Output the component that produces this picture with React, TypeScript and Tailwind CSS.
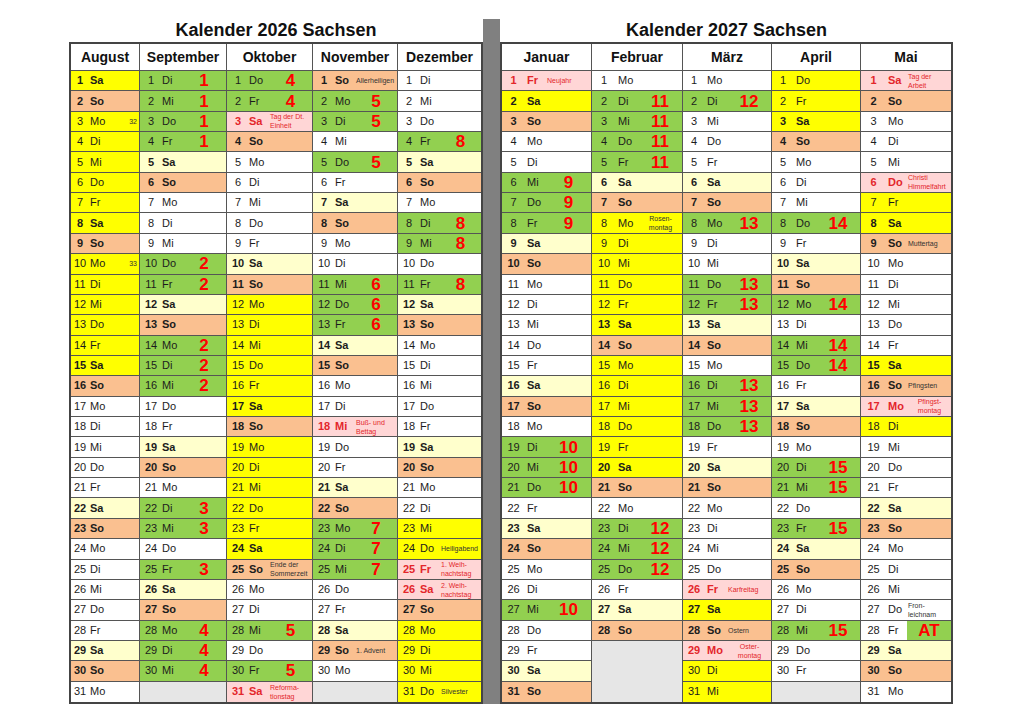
import React from "react";

const DAYS = ["Mo", "Di", "Mi", "Do", "Fr", "Sa", "So"];

type Note = { lines: string[]; center?: boolean };

type Month = {
  name: string;
  start: number; // 0 = Montag
  days: number;
  col: string;
  num: string;
  day: string;
  ferien?: number[];
  weeks?: Record<number, string>;
  feiertage?: Record<number, Note>;
  notes?: Record<number, Note>;
  kw?: Record<number, string>;
  at?: Record<number, string>;
};

function range(a: number, b: number) {
  const out: number[] = [];
  for (let i = a; i <= b; i++) out.push(i);
  return out;
}

function wk(...groups: [string, number[]][]) {
  const out: Record<number, string> = {};
  for (const [n, ds] of groups) for (const d of ds) out[d] = n;
  return out;
}

const n = (...lines: string[]): Note => ({ lines });
const nc = (...lines: string[]): Note => ({ lines, center: true });

const LEFT: Month[] = [
  {
    name: "August",
    start: 5,
    days: 31,
    col: "w-[69px]",
    num: "w-[18px]",
    day: "w-[20px] pl-[1px]",
    ferien: range(1, 16),
    kw: { 3: "32", 10: "33" },
  },
  {
    name: "September",
    start: 1,
    days: 30,
    col: "w-[87px]",
    num: "w-[22px]",
    day: "w-[20px]",
    weeks: wk(["1", [1, 2, 3, 4]], ["2", [10, 11, 14, 15, 16]], ["3", [22, 23, 25]], ["4", [28, 29, 30]]),
  },
  {
    name: "Oktober",
    start: 3,
    days: 31,
    col: "w-[86px]",
    num: "w-[22px]",
    day: "w-[20px]",
    ferien: range(12, 24),
    weeks: wk(["4", [1, 2]], ["5", [28, 30]]),
    feiertage: { 3: n("Tag der Dt.", "Einheit"), 31: n("Reforma-", "tionstag") },
    notes: { 25: n("Ende der", "Sommerzeit") },
  },
  {
    name: "November",
    start: 6,
    days: 30,
    col: "w-[85px]",
    num: "w-[22px]",
    day: "w-[20px]",
    weeks: wk(["5", [2, 3, 5]], ["6", [11, 12, 13]], ["7", [23, 24, 25]]),
    feiertage: { 18: n("Buß- und", "Bettag") },
    notes: { 1: n("Allerheiligen"), 29: n("1. Advent") },
  },
  {
    name: "Dezember",
    start: 1,
    days: 31,
    col: "flex-1",
    num: "w-[22px]",
    day: "w-[20px]",
    ferien: [23, 24, 28, 29, 30, 31],
    weeks: wk(["8", [4, 8, 9, 11]]),
    feiertage: { 25: n("1. Weih-", "nachtstag"), 26: n("2. Weih-", "nachtstag") },
    notes: { 24: n("Heiligabend"), 31: n("Silvester") },
  },
];

const RIGHT: Month[] = [
  {
    name: "Januar",
    start: 4,
    days: 31,
    col: "w-[90px]",
    num: "w-[23px]",
    day: "w-[21px] pl-[2px]",
    ferien: [2],
    weeks: wk(["9", [6, 7, 8]], ["10", [19, 20, 21, 27]]),
    feiertage: { 1: n("Neujahr") },
  },
  {
    name: "Februar",
    start: 0,
    days: 28,
    col: "w-[91px]",
    num: "w-[24px]",
    day: "w-[22px] pl-[2px]",
    ferien: range(8, 20),
    weeks: wk(["11", [2, 3, 4, 5]], ["12", [23, 24, 25]]),
    notes: { 8: nc("Rosen-", "montag") },
  },
  {
    name: "März",
    start: 0,
    days: 31,
    col: "w-[89px]",
    num: "w-[22px]",
    day: "w-[22px] pl-[2px]",
    ferien: [27, 30, 31],
    weeks: wk(["12", [2]], ["13", [8, 11, 12, 16, 17, 18]]),
    feiertage: { 26: n("Karfreitag"), 29: nc("Oster-", "montag") },
    notes: { 28: n("Ostern") },
  },
  {
    name: "April",
    start: 3,
    days: 30,
    col: "w-[89px]",
    num: "w-[22px]",
    day: "w-[22px] pl-[2px]",
    ferien: [1, 2, 3],
    weeks: wk(["14", [8, 12, 14, 15]], ["15", [20, 21, 23, 28]]),
  },
  {
    name: "Mai",
    start: 5,
    days: 31,
    col: "flex-1",
    num: "w-[25px]",
    day: "w-[21px] pl-[2px]",
    ferien: [7, 8, 15, 18],
    feiertage: {
      1: n("Tag der", "Arbeit"),
      6: n("Christi", "Himmelfahrt"),
      17: nc("Pfingst-", "montag"),
    },
    notes: { 9: n("Muttertag"), 16: n("Pfingsten"), 27: n("Fron-", "leichnam") },
    at: { 28: "AT" },
  },
];

function DayCell({ m, d }: { m: Month; d: number }) {
  const wd = (m.start + d - 1) % 7;
  const hol = m.feiertage?.[d];
  const big = m.weeks?.[d];
  const note = hol ?? m.notes?.[d];
  const at = m.at?.[d];

  let bg = wd === 6 ? "bg-[#fac090]" : wd === 5 ? "bg-[#ffffcc]" : "bg-white";
  if (m.ferien?.includes(d) && wd !== 6) bg = "bg-[#ffff00]";
  if (big) bg = "bg-[#92d050]";
  if (hol) bg = "bg-[#ffd6d6]";

  const bold = wd >= 5 || !!hol;
  const ink = hol ? "text-[#e3262b]" : "text-[#1c1c1c]";

  return (
    <div className={`flex min-h-0 items-center border-b border-[#555] last:border-b-0 ${bg}`}>
      <span className={`${m.num} shrink-0 text-center text-[11px] leading-none ${bold ? "font-bold" : ""} ${ink}`}>
        {d}
      </span>
      <span className={`${m.day} shrink-0 text-[11px] leading-none ${bold ? "font-bold" : ""} ${ink}`}>
        {DAYS[wd]}
      </span>
      <div
        className={`flex min-w-0 flex-1 items-center self-stretch ${at ? "justify-center bg-[#92d050]" : ""} ${
          m.kw?.[d] ? "justify-end pr-[2px]" : ""
        }`}
      >
        {big && <span className="w-full text-center text-[17px] font-bold leading-none text-[#ff0000]">{big}</span>}
        {at && <span className="text-[17px] font-bold leading-none text-[#ff0000]">{at}</span>}
        {m.kw?.[d] && <span className="text-[7px] leading-none text-[#333]">{m.kw[d]}</span>}
        {note && (
          <div
            className={`whitespace-nowrap pl-[1px] text-[7px] leading-[9px] ${note.center ? "w-full text-center" : ""} ${
              hol ? "text-[#e3262b]" : "text-[#333]"
            }`}
          >
            {note.lines.map((l) => (
              <div key={l}>{l}</div>
            ))}
          </div>
        )}
      </div>
    </div>
  );
}

function MonthColumn({ m }: { m: Month }) {
  const missing = 31 - m.days;
  return (
    <div
      className={`${m.col} grid h-full grid-rows-[27px_repeat(31,minmax(0,1fr))] border-r border-[#555] last:border-r-0`}
    >
      <div className="flex items-center justify-center border-b border-[#555] bg-white text-[14px] font-bold text-[#111]">
        {m.name}
      </div>
      {range(1, m.days).map((d) => (
        <DayCell key={d} m={m} d={d} />
      ))}
      {missing > 0 && <div className={`${missing === 3 ? "row-span-3" : "row-span-1"} bg-[#e6e6e6]`} />}
    </div>
  );
}

function YearBlock({ title, months, width }: { title: string; months: Month[]; width: string }) {
  return (
    <div className={`${width} flex shrink-0 flex-col`}>
      <div className="h-[42px] pt-[19px] text-center text-[18px] font-bold leading-[22px] text-[#111]">{title}</div>
      <div className="flex h-[662px] border-2 border-[#444]">
        {months.map((m) => (
          <MonthColumn key={m.name} m={m} />
        ))}
      </div>
    </div>
  );
}

export default function App() {
  return (
    <div className="h-[724px] w-[1024px] overflow-hidden bg-white font-['Liberation_Sans',Arial,sans-serif]">
      <div className="flex pl-[69px]">
        <YearBlock title="Kalender 2026 Sachsen" months={LEFT} width="w-[414px]" />
        <div className="mt-[19px] h-[685px] w-[17px] shrink-0 bg-[#808080]" />
        <YearBlock title="Kalender 2027 Sachsen" months={RIGHT} width="w-[453px]" />
      </div>
    </div>
  );
}
